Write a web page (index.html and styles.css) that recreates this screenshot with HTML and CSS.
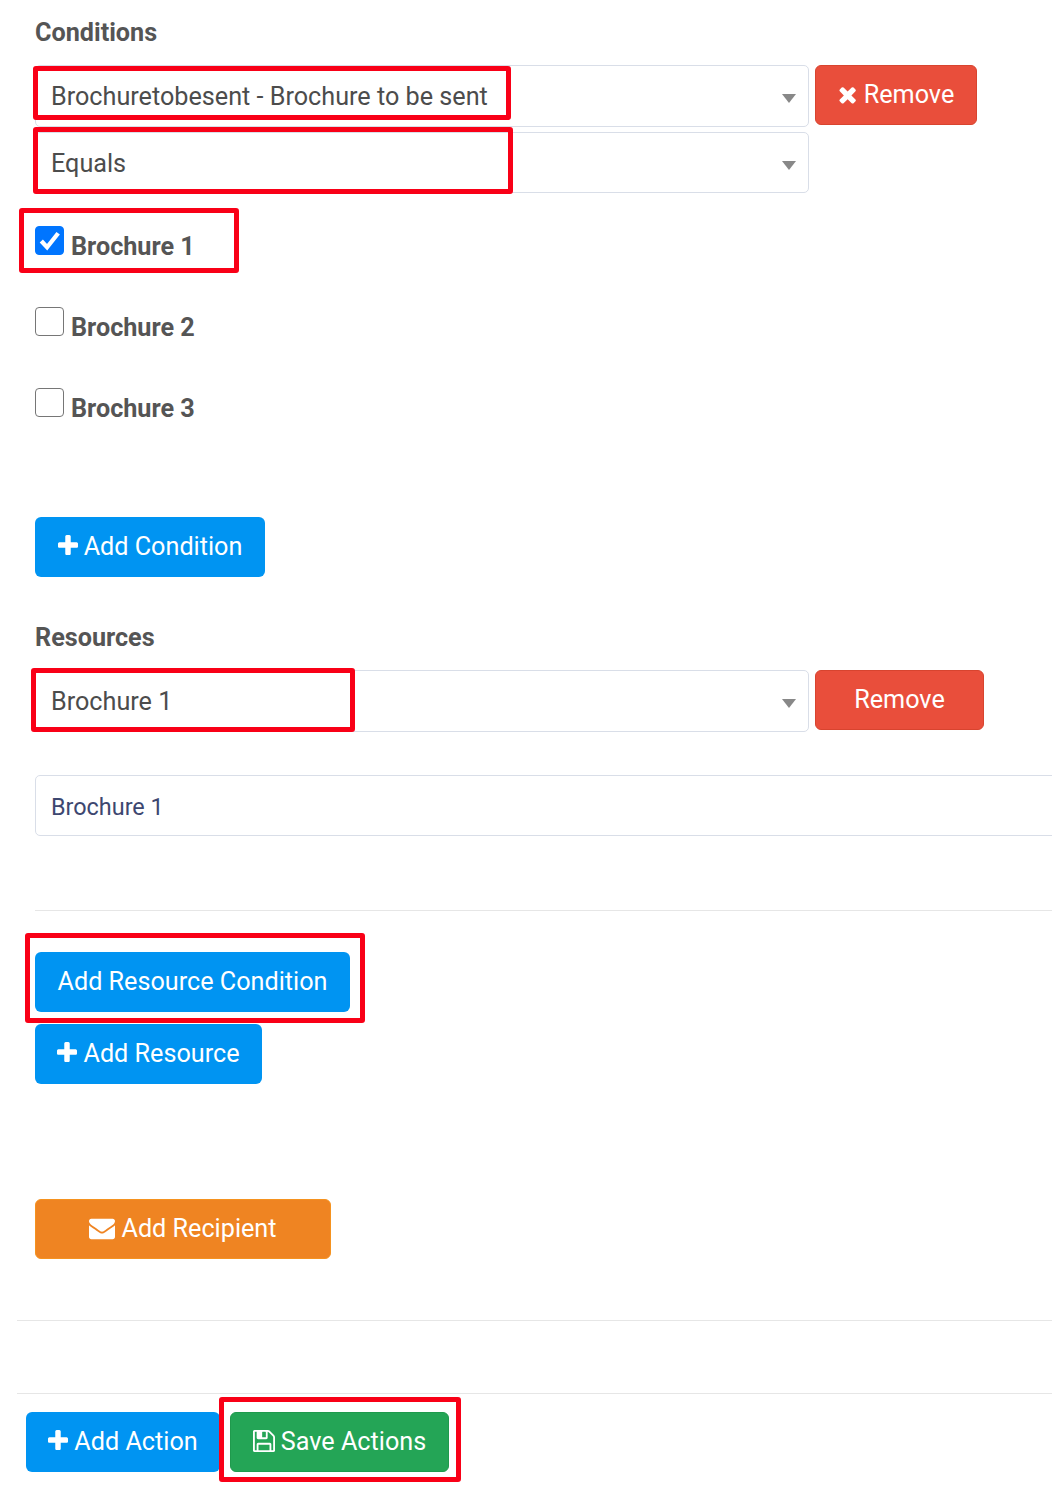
FILE: index.html
```html
<!DOCTYPE html>
<html lang="en">
  <head>
    <meta charset="UTF-8" />
    <meta name="viewport" content="width=device-width, initial-scale=1.0" />
    <title>Actions</title>
    <link rel="stylesheet" href="styles.css">
  </head>
  <body>
    <svg class="defs" width="0" height="0">
      <symbol id="i-plus" viewBox="0 0 1408 1792"><path transform="translate(-192 0)" d="M1600 736v192q0 40-28 68t-68 28h-416v416q0 40-28 68t-68 28h-192q-40 0-68-28t-28-68v-416h-416q-40 0-68-28t-28-68v-192q0-40 28-68t68-28h416v-416q0-40 28-68t68-28h192q40 0 68 28t28 68v416h416q40 0 68 28t28 68z"/></symbol>
      <symbol id="i-times" viewBox="200 0 1300 1792"><path d="M1490 1322q0 40-28 68l-136 136q-28 28-68 28t-68-28l-294-294-294 294q-28 28-68 28t-68-28l-136-136q-28-28-28-68t28-68l294-294-294-294q-28-28-28-68t28-68l136-136q28-28 68-28t68 28l294 294 294-294q28-28 68-28t68 28l136 136q28 28 28 68t-28 68l-294 294 294 294q28 28 28 68z"/></symbol>
      <symbol id="i-envelope" viewBox="0 0 1792 1792"><path d="M1792 710v794q0 66-47 113t-113 47h-1472q-66 0-113-47t-47-113v-794q44 49 101 87 362 246 497 345 57 42 92.500 65.500t94.500 48 110 24.500h2q51 0 110-24.500t94.500-48 92.500-65.500q170-123 498-345 57-39 100-87zm0-294q0 79-49 151t-122 123q-376 261-468 325-10 7-42.500 30.500t-54 38-52 32.500-57.500 27-50 9h-2q-23 0-50-9t-57.500-27-52-32.500-54-38-42.500-30.500q-91-64-262-182.500t-205-142.500q-62-42-117-115.500t-55-136.500q0-78 41.500-130t118.500-52h1472q65 0 112.500 47t47.500 113z"/></symbol>
      <symbol id="i-save" viewBox="128 128 1536 1536"><path d="M512 1536h768v-384h-768v384zm896 0h128v-896q0-14-10-38.500t-20-34.500l-281-281q-10-10-34-20t-39-10v416q0 40-28 68t-68 28h-576q-40 0-68-28t-28-68v-416h-128v1280h128v-416q0-40 28-68t68-28h832q40 0 68 28t28 68v416zm-384-928v-320q0-13-9.500-22.500t-22.500-9.500h-192q-13 0-22.500 9.500t-9.500 22.500v320q0 13 9.500 22.500t22.500 9.500h192q13 0 22.500-9.500t9.500-22.500zm640 32v928q0 40-28 68t-68 28h-1344q-40 0-68-28t-28-68v-1344q0-40 28-68t68-28h928q40 0 88 20t76 48l280 280q28 28 48 76t20 88z"/></symbol>
    </svg>

    <div class="page">
      <section class="block">
        <h4 class="title">Conditions</h4>
        <div class="row">
          <div class="select">
            Brochuretobesent - Brochure to be sent
            <span class="arrow"></span>
            <span class="mark mark-field"></span>
          </div>
          <button class="btn btn-red btn-remove-icon"><svg class="icon icon-times"><use href="#i-times"/></svg>Remove</button>
        </div>
        <div class="select select-second">
          Equals
          <span class="arrow"></span>
          <span class="mark mark-equals"></span>
        </div>

        <div class="checks">
          <label class="check">
            <span class="box box-on"><svg viewBox="0 0 28 28"><path d="M5.500 14.500l6 6.500L23 6.500" /></svg></span>
            Brochure 1
            <span class="mark mark-check"></span>
          </label>
          <label class="check"><span class="box"></span>Brochure 2</label>
          <label class="check"><span class="box"></span>Brochure 3</label>
        </div>

        <button class="btn btn-blue btn-condition"><svg class="icon icon-plus"><use href="#i-plus"/></svg>Add Condition</button>
      </section>

      <section class="block">
        <h4 class="title title-resources">Resources</h4>
        <div class="row">
          <div class="select select-resource">
            Brochure 1
            <span class="arrow"></span>
            <span class="mark mark-resource"></span>
          </div>
          <button class="btn btn-red btn-remove">Remove</button>
        </div>
        <input class="text-input" type="text" value="Brochure 1">
        <hr class="rule rule-inner">
        <div class="stack">
          <button class="btn btn-blue btn-res-cond">Add Resource Condition<span class="mark mark-res-cond"></span></button>
          <button class="btn btn-blue btn-resource"><svg class="icon icon-plus"><use href="#i-plus"/></svg>Add Resource</button>
        </div>
        <button class="btn btn-orange btn-recipient"><svg class="icon icon-envelope"><use href="#i-envelope"/></svg>Add Recipient</button>
      </section>

      <hr class="rule rule-outer rule-a">
      <hr class="rule rule-outer rule-b">

      <div class="footer">
        <button class="btn btn-blue btn-action"><svg class="icon icon-plus"><use href="#i-plus"/></svg>Add Action</button>
        <button class="btn btn-green btn-save"><svg class="icon icon-save"><use href="#i-save"/></svg>Save Actions<span class="mark mark-save"></span></button>
      </div>
    </div>
  </body>
</html>
```

FILE: styles.css
```css
html, body {
  margin: 0;
  height: 1488px;
  overflow: hidden;
  background: #fff;
}
body {
  font-family: Roboto, "Liberation Sans", sans-serif;
  font-size: 25.2px;
  color: #4c4c4c;
}
.defs {
  position: absolute;
}
.page {
  width: 1052px;
  height: 1488px;
  overflow: hidden;
  padding-top: 18px;
  box-sizing: border-box;
}

.block {
  padding-left: 35px;
}
.title {
  margin: 0;
  font-size: 25.2px;
  line-height: 30px;
  font-weight: 700;
  color: #555;
}
.title-resources {
  margin-top: 46px;
}

.row {
  display: flex;
  align-items: flex-start;
  gap: 6px;
  margin-top: 17px;
}
.select {
  position: relative;
  width: 774px;
  height: 62px;
  box-sizing: border-box;
  padding-left: 15px;
  border: 1px solid #d9dee8;
  border-radius: 5px;
  display: flex;
  align-items: center;
  flex-shrink: 0;
  background: #fff;
}
.select-second {
  margin-top: 5px;
  height: 61px;
  padding-top: 2px;
}
.arrow {
  position: absolute;
  right: 12px;
  top: 28px;
  border-left: 7px solid transparent;
  border-right: 7px solid transparent;
  border-top: 9px solid #888;
}

.checks {
  margin-top: 15px;
}
.check {
  display: flex;
  align-items: flex-start;
  height: 81px;
  font-weight: 700;
  color: #555;
  position: relative;
  padding-top: 18px;
  box-sizing: border-box;
  line-height: 42px;
}
.box {
  width: 29px;
  height: 29px;
  box-sizing: border-box;
  border: 1px solid #767676;
  border-radius: 4px;
  margin-right: 7px;
  background: #fff;
  flex-shrink: 0;
}
.box svg {
  display: block;
  width: 27px;
  height: 27px;
  fill: none;
  stroke: #fff;
  stroke-width: 4.500;
}
.box-on {
  background: #0075ff;
  border-color: #0075ff;
}

.btn {
  position: relative;
  display: flex;
  align-items: center;
  justify-content: center;
  height: 60px;
  box-sizing: border-box;
  padding: 0 0 2px;
  border: 1px solid transparent;
  border-radius: 6px;
  font-family: inherit;
  font-size: 25.2px;
  color: #fff;
  flex-shrink: 0;
}
.btn-blue {
  background: #0094f2;
}
.btn-red {
  background: #e94e3b;
  border-color: #d8442f;
}
.btn-orange {
  background: #ef8422;
  border-color: #f5921f;
}
.btn-green {
  background: #24a556;
  border-color: #1f9a4d;
}
.btn-remove-icon {
  width: 162px;
}
.btn-remove {
  width: 169px;
}
.btn-condition {
  width: 230px;
  margin-top: 66px;
}
.btn-res-cond {
  width: 315px;
}
.btn-resource {
  width: 227px;
}
.btn-recipient {
  width: 296px;
  margin-top: 115px;
}
.btn-action {
  width: 194px;
}
.btn-save {
  width: 219px;
}

.icon {
  fill: currentColor;
  flex-shrink: 0;
}
.icon-times {
  width: 18px;
  height: 25px;
  margin-right: 8px;
}
.icon-plus {
  width: 20px;
  height: 26px;
  margin-right: 6px;
}
.icon-envelope {
  width: 26px;
  height: 26px;
  margin-right: 6px;
}
.icon-save {
  width: 22px;
  height: 22px;
  margin-right: 6px;
}

.text-input {
  display: block;
  width: 1100px;
  height: 61px;
  box-sizing: border-box;
  margin-top: 43px;
  padding: 2px 15px 0;
  border: 1px solid #d9dee8;
  border-radius: 5px;
  font-family: inherit;
  font-size: 23.4px;
  color: #3d4770;
  outline: none;
}

.rule {
  border: 0;
  border-top: 1px solid #e6e6e6;
  margin: 0;
}
.rule-inner {
  margin-top: 74px;
  width: 1100px;
}
.stack {
  display: flex;
  flex-direction: column;
  align-items: flex-start;
  gap: 12px;
  margin-top: 41px;
}
.rule-outer {
  margin-left: 17px;
  width: 1100px;
}
.rule-a {
  margin-top: 61px;
}
.rule-b {
  margin-top: 72px;
}

.footer {
  display: flex;
  gap: 10px;
  padding-left: 26px;
  margin-top: 18px;
}

/* red annotation boxes drawn over the screenshot */
.mark {
  position: absolute;
  box-sizing: border-box;
  border: 5.500px solid #f90017;
  border-radius: 3px;
  pointer-events: none;
}
.mark-field {
  left: -3px;
  top: 0;
  width: 478px;
  height: 54px;
}
.mark-equals {
  left: -3px;
  top: -6px;
  width: 480px;
  height: 67px;
}
.mark-check {
  left: -16px;
  top: 0;
  width: 220px;
  height: 65px;
}
.mark-resource {
  left: -5px;
  top: -3px;
  width: 324px;
  height: 64px;
}
.mark-res-cond {
  left: -11px;
  top: -20px;
  width: 340px;
  height: 90px;
}
.mark-save {
  left: -12px;
  top: -16px;
  width: 242px;
  height: 85px;
}
```
